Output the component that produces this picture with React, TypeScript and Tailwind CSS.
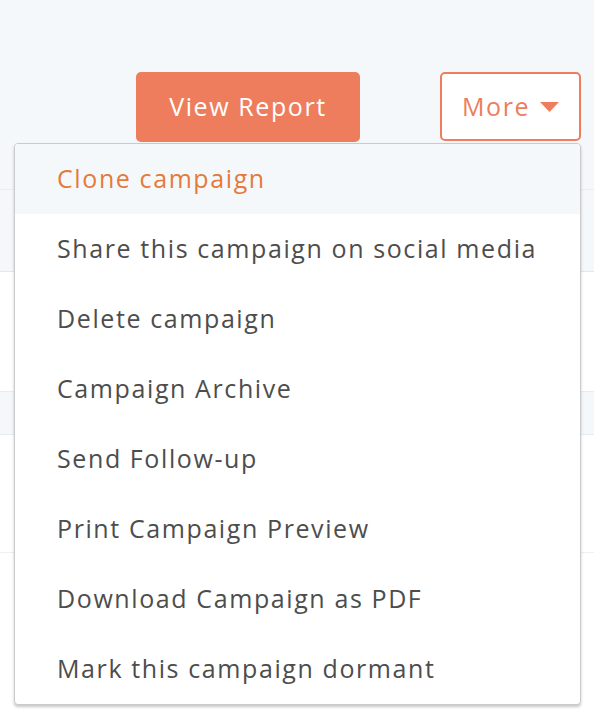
import { useState } from "react";

const items = [
  "Clone campaign",
  "Share this campaign on social media",
  "Delete campaign",
  "Campaign Archive",
  "Send Follow-up",
  "Print Campaign Preview",
  "Download Campaign as PDF",
  "Mark this campaign dormant",
];

export default function App() {
  const [active, setActive] = useState(0);

  return (
    <div className="relative min-h-screen w-full bg-white font-['Open_Sans',sans-serif] tracking-[1.6px]">
      {/* Header with actions */}
      <div className="h-[190px] border-b border-[#e9eef2] bg-[#f4f8fb]">
        <div className="flex items-start justify-end gap-[80px] pr-[13px] pt-[72px]">
          <button className="flex h-[70px] w-[224px] items-center justify-center rounded-[5px] bg-[#ee7d5d] text-[25px] text-white">
            View Report
          </button>
          <button className="flex h-[69px] w-[141px] items-center justify-center gap-[10px] rounded-[5px] border-2 border-[#ee7d5d] bg-white text-[25px] text-[#ee7d5d]">
            More
            <svg width="19" height="10" viewBox="0 0 19 10" aria-hidden>
              <path d="M0 0h19L9.5 10z" fill="#ee7d5d" />
            </svg>
          </button>
        </div>
      </div>

      {/* Table rows behind the menu */}
      <div className="h-[82px] border-b border-[#e1e8ed] bg-[#f4f8fb]" />
      <div className="h-[120px] border-b border-[#e6ecf0] bg-white" />
      <div className="h-[43px] border-b border-[#e6ecf0] bg-[#f4f8fb]" />
      <div className="h-[118px] border-b border-[#edf1f4] bg-white" />

      {/* Dropdown */}
      <ul className="absolute right-[13px] top-[143px] w-[567px] overflow-hidden rounded-[4px] border border-[#cbcbcb] bg-white shadow-[0_2px_3px_rgba(0,0,0,0.22)]">
        {items.map((label, i) => (
          <li
            key={label}
            onMouseEnter={() => setActive(i)}
            className={
              "flex h-[70px] items-center pl-[42px] text-[25px] " +
              (i === active ? "bg-[#f4f8fb] text-[#e67a3a]" : "text-[#4d4d4d]")
            }
          >
            {label}
          </li>
        ))}
      </ul>
    </div>
  );
}
